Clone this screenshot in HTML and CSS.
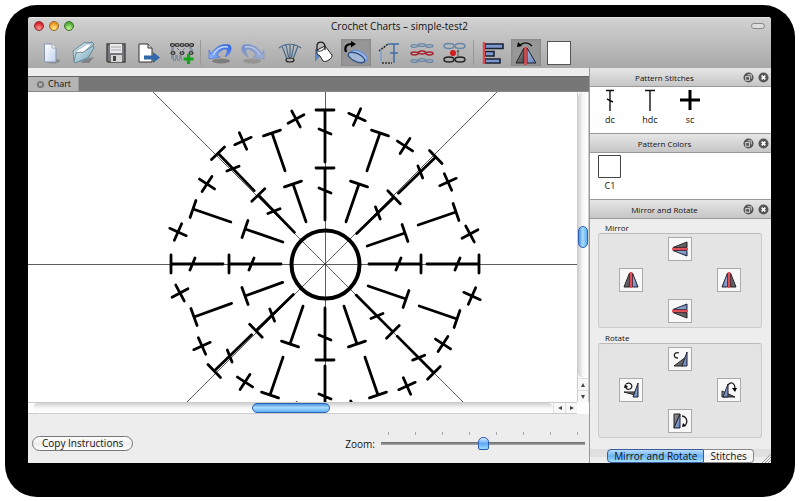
FILE: index.html
```
<!DOCTYPE html>
<html lang="en">
<head>
    <meta charset="UTF-8">
    <meta name="viewport" content="width=device-width, initial-scale=1.0">
    <title>Crochet Charts – simple-test2</title>
    <link rel="stylesheet" href="styles.css">
</head>
<body>
    <!-- shared shapes -->
    <svg class="defs" width="0" height="0" aria-hidden="true">
        <defs>
            <linearGradient id="paper" x1="0" y1="0" x2="1" y2="1">
                <stop offset="0" stop-color="#fff"/>
                <stop offset="1" stop-color="#c3d3f2"/>
            </linearGradient>
            <linearGradient id="folder" x1="0" y1="0" x2="1" y2="1">
                <stop offset="0" stop-color="#e3f4f8"/>
                <stop offset="1" stop-color="#6d9db0"/>
            </linearGradient>
            <linearGradient id="steel" x1="0" y1="0" x2="1" y2="1">
                <stop offset="0" stop-color="#a9bfe0"/>
                <stop offset="1" stop-color="#5f7fb5"/>
            </linearGradient>
            <linearGradient id="coal" x1="0" y1="0" x2="1" y2="1">
                <stop offset="0" stop-color="#9b9ba0"/>
                <stop offset="1" stop-color="#45454a"/>
            </linearGradient>
            <linearGradient id="swoosh" x1="0" y1="1" x2="1" y2="0">
                <stop offset="0" stop-color="#8fb5ff"/>
                <stop offset="1" stop-color="#2f62dd"/>
            </linearGradient>
            <g id="sc">
                <path d="M-9 0H9M0-9V9"/>
            </g>
            <g id="hdc">
                <path d="M-9 0H9M0 0V40"/>
            </g>
            <g id="dc">
                <path d="M-9-96H9M0-96V-44M-6-76L6-71"/>
                <path d="M-9-154H9M0-154V-102M-6-135L6-130"/>
            </g>
            <g id="flip">
                <path d="M9.500 4v14H4z" fill="url(#coal)" stroke="#222"/>
                <path d="M12.500 4v14H18z" fill="url(#steel)" stroke="#223"/>
                <path d="M11 3v16" stroke="#dd5059" stroke-width="2.600"/>
            </g>
            <g id="wedge">
                <path d="M18 4v14h-5z" fill="url(#steel)" stroke="#223"/>
            </g>
            <g id="undo">
                <ellipse cx="13" cy="20" rx="9" ry="2.500" fill="#555" opacity=".55"/>
                <path d="M1 9l2 4C8 5 15 2 22 4c3 4 0 9-5 12 2-4 3-7 1-8-4 0-7 3-9 6l3 2L1 18z" fill="url(#swoosh)" stroke="#3b6be0" stroke-width=".6"/>
                <path d="M5 14C9 7 15 5 20 6" fill="none" stroke="#c5d9ff" stroke-width="1.500"/>
            </g>
            <g id="float">
                <circle cx="6" cy="6" r="5.5" fill="#555"/>
                <rect x="3" y="5" width="4" height="4" fill="none" stroke="#ddd"/>
                <path d="M5 3h4v4" fill="none" stroke="#ddd"/>
            </g>
            <g id="close">
                <circle cx="6" cy="6" r="5.5" fill="#555"/>
                <path d="M4 4l4 4M8 4l-4 4" stroke="#fff" stroke-width="1.8"/>
            </g>
        </defs>
    </svg>

    <div class="frame">
        <div class="window">
            <header class="top">
                <div class="titlebar">
                    <div class="lights">
                        <button class="light red" aria-label="Close"></button>
                        <button class="light amber" aria-label="Minimize"></button>
                        <button class="light green" aria-label="Maximize"></button>
                    </div>
                    <h1>Crochet Charts – simple-test2</h1>
                    <button class="pill" aria-label="Toggle toolbar"></button>
                </div>
                <div class="toolbar">
                    <button class="tool" aria-label="New">
                        <svg viewBox="0 0 24 24"><ellipse cx="15" cy="20" rx="7" ry="2.5" fill="#666" opacity=".5"/><path d="M6.500 3H14l4 4v14H6.500z" fill="url(#paper)" stroke="#8794ae"/><path d="M14 3v4h4" fill="#fff" stroke="#8794ae" stroke-width=".7"/></svg>
                    </button>
                    <button class="tool" aria-label="Open">
                        <svg viewBox="0 0 24 24"><path d="M10 22h8l5-6-5 1z" fill="#555" opacity=".5"/><path d="M2 10L14 1l2 1 5-1 2 2-9 17H3z" fill="url(#folder)" stroke="#58798a" stroke-width=".8"/><path d="M4 11L16 3l5 0-9 9z" fill="#fff" stroke="#7a96a4" stroke-width=".5"/><path d="M3 21l2-9 5-1 1 1L22 5l1 2-6 10-13 5z" fill="url(#folder)" stroke="#58798a" stroke-width=".8"/></svg>
                    </button>
                    <button class="tool" aria-label="Save">
                        <svg viewBox="0 0 24 24"><path d="M3 3h18v18H4l-1-1z" fill="#77777b" stroke="#444" stroke-width="1.400"/><path d="M6 3h12v9H6z" fill="#e9e9ec"/><path d="M7 6h10M7 9h10" stroke="#aaa"/><path d="M7 14h11v7H7z" fill="#d5d5d8"/><path d="M9 15h3v5H9z" fill="#444"/></svg>
                    </button>
                    <button class="tool" aria-label="Export">
                        <svg viewBox="0 0 24 24"><path d="M2 3h9l4 4v14H2z" fill="#fff" stroke="#333"/><path d="M11 3v4h4" fill="#ddd" stroke="#333"/><path d="M7 14.500h9V11l7 5.500-7 5.500v-3.500H7z" fill="#2f68ad"/></svg>
                    </button>
                    <button class="tool" aria-label="Add rows">
                        <svg viewBox="0 0 24 24">
                            <g fill="none" stroke="#333" stroke-width="1.200"><ellipse cx="2.500" cy="4" rx="2" ry="1.300"/><ellipse cx="7.200" cy="4" rx="2" ry="1.300"/><ellipse cx="12" cy="4" rx="2" ry="1.300"/><ellipse cx="16.800" cy="4" rx="2" ry="1.300"/><ellipse cx="21.500" cy="4" rx="2" ry="1.300"/><ellipse cx="3" cy="12" rx="2" ry="1.300"/><ellipse cx="12" cy="12" rx="2" ry="1.300"/><ellipse cx="21" cy="12" rx="2" ry="1.300"/></g>
                            <path d="M1 7h4M7 7l4 4 4-4M19 7h4M1 9h3M20 9h3M1 15h11M1 17h11M3 19h9" fill="none" stroke="#5f7191" stroke-dasharray="3 1"/>
                            <path d="M18.500 13v10M13.500 18h10" stroke="#14a51b" stroke-width="3.200"/>
                        </svg>
                    </button>
                    <span class="sep"></span>
                    <button class="tool" aria-label="Undo">
                        <svg viewBox="0 0 24 24"><use href="#undo"/></svg>
                    </button>
                    <button class="tool" aria-label="Redo">
                        <svg viewBox="0 0 24 24" opacity=".5"><use href="#undo" transform="matrix(-1 0 0 1 24 0)"/></svg>
                    </button>
                    <button class="tool apart" aria-label="Stitch mode">
                        <svg viewBox="0 0 24 24" fill="none" stroke="#46698c" stroke-width="1.200"><path d="M1 7c6-5 16-5 22 0M4 5l5 13M20 5l-5 13M12 4v14M8 4l2.500 12M16 4l-2.500 12"/><ellipse cx="12" cy="19" rx="4" ry="2" stroke="#222"/></svg>
                    </button>
                    <button class="tool" aria-label="Color mode">
                        <svg viewBox="0 0 24 24"><path d="M4 8v13l6-7V8z" fill="#5d87c0"/><path d="M6 9l8-4 7 9c1 3-6 8-9 6L9 15l-3-2z" fill="#fff" stroke="#222"/><path d="M6 9c2 3 8 0 8-4" fill="none" stroke="#222"/><path d="M6 9V4c1-4 7-4 8 1v4" fill="none" stroke="#222" stroke-width="1.300"/></svg>
                    </button>
                    <button class="tool on" aria-label="Rotate stitch">
                        <svg viewBox="0 0 24 24"><ellipse cx="15" cy="15" rx="9" ry="4.500" transform="rotate(28 15 15)" fill="#a9c0e8" stroke="#6f92d6" stroke-width="1.500"/><ellipse cx="12.500" cy="16.500" rx="9" ry="4" transform="rotate(25 12.500 16.500)" fill="#a4b8d8" stroke="#2f5285" stroke-width="1.400"/><path d="M2 11C0 5 3 3 8 3" fill="none" stroke="#000" stroke-width="2.200"/><path d="M7 0l5 3-5 3.500z"/></svg>
                    </button>
                    <button class="tool" aria-label="Angle">
                        <svg viewBox="0 0 24 24" fill="none" stroke="#3f6ca5" stroke-width="1.500"><path d="M2 10L11 3" stroke="#222" stroke-dasharray="2 1"/><path d="M11 3h11M17 3v19M13 12h8"/><path d="M4 9v12" stroke="#7ea0c8"/><path d="M5 22h10" stroke="#333" stroke-dasharray="2 1"/></svg>
                    </button>
                    <button class="tool" aria-label="Rows">
                        <svg viewBox="0 0 24 24" fill="none" stroke-width="1.200">
                            <g stroke="#6587a8"><ellipse cx="4.500" cy="5" rx="3.500" ry="1.400"/><ellipse cx="12" cy="4" rx="3.500" ry="1.400"/><ellipse cx="19.500" cy="5" rx="3.500" ry="1.400"/><ellipse cx="4.500" cy="20" rx="3.500" ry="1.400"/><ellipse cx="12" cy="19" rx="3.500" ry="1.400"/><ellipse cx="19.500" cy="20" rx="3.500" ry="1.400"/></g>
                            <g stroke="#a8232d" stroke-width="1.500"><ellipse cx="4.500" cy="12.500" rx="3.500" ry="1.400"/><ellipse cx="12" cy="11.500" rx="3.500" ry="1.400"/><ellipse cx="19.500" cy="12.500" rx="3.500" ry="1.400"/></g>
                        </svg>
                    </button>
                    <button class="tool" aria-label="Insert between rows">
                        <svg viewBox="0 0 24 24" fill="none" stroke-width="1.400"><ellipse cx="6" cy="5" rx="5" ry="2.500" stroke="#6587a8"/><ellipse cx="17" cy="5" rx="5" ry="2.500" stroke="#6587a8"/><ellipse cx="6" cy="18.500" rx="5" ry="2.500" stroke="#222"/><ellipse cx="17" cy="18.500" rx="5" ry="2.500" stroke="#222"/><circle cx="10" cy="12" r="3" fill="#d31a1f"/><path d="M15 15v-5m-1 1l1-2 1 2" stroke="#555" stroke-width="1"/></svg>
                    </button>
                    <span class="sep"></span>
                    <button class="tool" aria-label="Align">
                        <svg viewBox="0 0 24 24"><g fill="#7f9ad0" stroke="#1a2233" stroke-width="1.600"><path d="M4 3h18v4.500H4zM4 10.500h9v4.500H4zM4 18h15v4H4z"/></g><path d="M3 1v22" stroke="#e0474b" stroke-width="2.400"/></svg>
                    </button>
                    <button class="tool on" aria-label="Mirror and Rotate">
                        <svg viewBox="0 0 24 24"><path d="M10 7v15H2z" fill="url(#coal)" stroke="#222"/><path d="M13 7v15h9z" fill="url(#steel)" stroke="#223"/><path d="M11.500 6v18" stroke="#d9434b" stroke-width="2.600"/><path d="M5 5c4-4 9-4 13 0" fill="none" stroke="#111" stroke-width="1.500"/><path d="M3 6l1-5 4 4z"/></svg>
                    </button>
                    <button class="tool" aria-label="Pick color"><span class="swatch"></span></button>
                </div>
            </header>

            <div class="body">
                <main class="editor">
                    <div class="tabs">
                        <button class="tab">
                            <svg viewBox="0 0 10 10"><circle cx="5" cy="5" r="4" fill="#777"/><path d="M3.500 3.500l3 3M6.500 3.500l-3 3" stroke="#c4c4c4" stroke-width="1.300"/></svg>
                            Chart
                        </button>
                    </div>
                    <div class="chart">
                        <svg class="canvas" viewBox="-297 -172 549 310" preserveAspectRatio="xMidYMid slice">
                            <path class="guides" d="M-700 .5H700M.5-700V700M-700-700L700 700M-700 700L700-700"/>
                            <circle class="ring" cx="0.5" cy="0.5" r="34"/>
                            <g class="stitches">
                                <use href="#dc"/>
                                <use href="#dc" transform="rotate(46)"/>
                                <use href="#dc" transform="rotate(90)"/>
                                <use href="#dc" transform="rotate(135)"/>
                                <use href="#dc" transform="rotate(180)"/>
                                <use href="#dc" transform="rotate(226)"/>
                                <use href="#dc" transform="rotate(270)"/>
                                <use href="#dc" transform="rotate(316)"/>

                                <use href="#hdc" transform="translate(-32 -80) rotate(-19)"/>
                                <use href="#hdc" transform="translate(-53 -131) rotate(-19)"/>
                                <use href="#hdc" transform="translate(34 -80) rotate(19)"/>
                                <use href="#hdc" transform="translate(55 -131) rotate(19)"/>
                                <use href="#hdc" transform="translate(80 -31) rotate(71)"/>
                                <use href="#hdc" transform="translate(131 -52) rotate(71)"/>
                                <use href="#hdc" transform="translate(81 35) rotate(109)"/>
                                <use href="#hdc" transform="translate(132 55) rotate(109)"/>
                                <use href="#hdc" transform="translate(32 80) rotate(161)"/>
                                <use href="#hdc" transform="translate(53 131) rotate(161)"/>
                                <use href="#hdc" transform="translate(-35 80) rotate(199)"/>
                                <use href="#hdc" transform="translate(-55 131) rotate(199)"/>
                                <use href="#hdc" transform="translate(-80 32) rotate(250)"/>
                                <use href="#hdc" transform="translate(-131 53) rotate(250)"/>
                                <use href="#hdc" transform="translate(-80 -35) rotate(289)"/>
                                <use href="#hdc" transform="translate(-132 -55) rotate(289)"/>

                                <use href="#sc" transform="translate(-29 -145) rotate(-28)"/>
                                <use href="#sc" transform="translate(-82 -123) rotate(-24)"/>
                                <use href="#sc" transform="translate(-118 -80) rotate(33)"/>
                                <use href="#sc" transform="translate(-147 -32) rotate(24)"/>
                                <use href="#sc" transform="translate(32 -147) rotate(24)"/>
                                <use href="#sc" transform="translate(80 -118) rotate(33)"/>
                                <use href="#sc" transform="translate(123 -82) rotate(-24)"/>
                                <use href="#sc" transform="translate(145 -30) rotate(-28)"/>
                                <use href="#sc" transform="translate(-145 29) rotate(-28)"/>
                                <use href="#sc" transform="translate(-123 82) rotate(-24)"/>
                                <use href="#sc" transform="translate(-80 118) rotate(33)"/>
                                <use href="#sc" transform="translate(-32 147) rotate(24)"/>
                                <use href="#sc" transform="translate(147 32) rotate(24)"/>
                                <use href="#sc" transform="translate(118 80) rotate(33)"/>
                                <use href="#sc" transform="translate(82 122) rotate(-24)"/>
                                <use href="#sc" transform="translate(30 145) rotate(-28)"/>
                            </g>
                        </svg>
                        <div class="vbar">
                            <div class="vtrack"><div class="vthumb"></div></div>
                            <button class="arrow" aria-label="Scroll up"><svg viewBox="0 0 6 6"><path d="M3 1l2 4H1z"/></svg></button>
                            <button class="arrow" aria-label="Scroll down"><svg viewBox="0 0 6 6"><path d="M3 5l2-4H1z"/></svg></button>
                        </div>
                        <div class="hbar">
                            <div class="htrack"><div class="hthumb"></div></div>
                            <button class="arrow" aria-label="Scroll left"><svg viewBox="0 0 6 6"><path d="M1 3l4-2v4z"/></svg></button>
                            <button class="arrow" aria-label="Scroll right"><svg viewBox="0 0 6 6"><path d="M5 3L1 1v4z"/></svg></button>
                        </div>
                        <div class="corner"></div>
                    </div>
                    <div class="status">
                        <button class="copy">Copy Instructions</button>
                        <label for="zoom">Zoom:</label>
                        <div class="slider">
                            <div class="ticks"><i></i><i></i><i></i><i></i><i></i><i></i><i></i><i></i></div>
                            <input type="range" id="zoom" min="0" max="100" value="50">
                        </div>
                    </div>
                </main>

                <aside class="docks">
                    <section class="dock">
                        <div class="dock-head">
                            <h2>Pattern Stitches</h2>
                            <button class="round" aria-label="Float"><svg viewBox="0 0 12 12"><use href="#float"/></svg></button>
                            <button class="round" aria-label="Close"><svg viewBox="0 0 12 12"><use href="#close"/></svg></button>
                        </div>
                        <ul class="items">
                            <li><svg viewBox="0 0 24 24" fill="none" stroke="#111"><path d="M8 2.500h8M12 2v21M9 11l6 3" stroke-width="1.400"/></svg>dc</li>
                            <li><svg viewBox="0 0 24 24" fill="none" stroke="#111"><path d="M7 2.500h10M12 2v21" stroke-width="1.400"/></svg>hdc</li>
                            <li><svg viewBox="0 0 24 24" fill="none" stroke="#000"><path d="M2 12h20M12 2v20" stroke-width="3"/></svg>sc</li>
                        </ul>
                    </section>
                    <section class="dock">
                        <div class="dock-head">
                            <h2>Pattern Colors</h2>
                            <button class="round" aria-label="Float"><svg viewBox="0 0 12 12"><use href="#float"/></svg></button>
                            <button class="round" aria-label="Close"><svg viewBox="0 0 12 12"><use href="#close"/></svg></button>
                        </div>
                        <ul class="items">
                            <li><svg viewBox="0 0 24 24" fill="#fff" stroke="#444"><path d="M.500 1.500h22v22H.500z"/></svg>C1</li>
                        </ul>
                    </section>
                    <section class="dock last">
                        <div class="dock-head">
                            <h2>Mirror and Rotate</h2>
                            <button class="round" aria-label="Float"><svg viewBox="0 0 12 12"><use href="#float"/></svg></button>
                            <button class="round" aria-label="Close"><svg viewBox="0 0 12 12"><use href="#close"/></svg></button>
                        </div>
                        <div class="groups">
                            <h3>Mirror</h3>
                            <div class="cross">
                                <button class="up" aria-label="Mirror up"><svg viewBox="0 0 22 22"><use href="#flip" transform="matrix(0 1 1 0 0 0)"/></svg></button>
                                <button class="left" aria-label="Mirror left"><svg viewBox="0 0 22 22"><use href="#flip"/></svg></button>
                                <button class="right" aria-label="Mirror right"><svg viewBox="0 0 22 22"><use href="#flip" transform="matrix(-1 0 0 1 22 0)"/></svg></button>
                                <button class="down" aria-label="Mirror down"><svg viewBox="0 0 22 22"><use href="#flip" transform="matrix(0 -1 1 0 0 22)"/></svg></button>
                            </div>
                            <h3>Rotate</h3>
                            <div class="cross">
                                <button class="up" aria-label="Rotate up"><svg viewBox="0 0 22 22"><path d="M5 18L17 9l-3 9z" fill="url(#coal)" stroke="#222"/><use href="#wedge"/><path d="M10 5c-5-2-7 5-1 5" fill="none" stroke="#222" stroke-width="1.300"/></svg></button>
                                <button class="left" aria-label="Rotate left"><svg viewBox="0 0 22 22"><path d="M4 13h12l-1 3z" fill="url(#coal)" stroke="#222"/><use href="#wedge"/><path d="M6 5c5-3 8 3 4 5-2 1-4 0-4-2" fill="none" stroke="#222" stroke-width="1.300"/><path d="M4 9l1-4 3 3z"/></svg></button>
                                <button class="right" aria-label="Rotate right"><svg viewBox="0 0 22 22"><path d="M4 12v6h13z" fill="url(#coal)" stroke="#222"/><path d="M10 5v13H5z" fill="url(#steel)" stroke="#223"/><path d="M10 6c3-4 7-2 7 4" fill="none" stroke="#222" stroke-width="1.300"/><path d="M14 9h5l-2 4z"/></svg></button>
                                <button class="down" aria-label="Rotate down"><svg viewBox="0 0 22 22"><path d="M5 4h6L5 18z" fill="url(#coal)" stroke="#222"/><path d="M11 4v14H5z" fill="url(#steel)" stroke="#223"/><path d="M13 6c6 1 6 8 2 10" fill="none" stroke="#222" stroke-width="1.300"/><path d="M13 17l1-4 3 3z"/></svg></button>
                            </div>
                        </div>
                        <div class="dock-tabs">
                            <button class="dock-tab active">Mirror and Rotate</button>
                            <button class="dock-tab">Stitches</button>
                        </div>
                        <svg class="grip" viewBox="0 0 9 9"><path d="M0 9l9-9M3 9l6-6M6 9l3-3" stroke="#999"/></svg>
                    </section>
                </aside>
            </div>
        </div>
    </div>
</body>
</html>
```
FILE: styles.css
```
* {
    box-sizing: border-box;
}
body {
    margin: 0;
    padding: 5px;
    min-height: 100vh;
    display: flex;
    background: #fff;
    font-family: "Open Sans", "Noto Sans", sans-serif;
    font-size: 10px;
    color: #111;
}
button {
    margin: 0;
    padding: 0;
    border: none;
    background: none;
    font: inherit;
    color: inherit;
}
svg {
    display: block;
}
h1, h2, h3 {
    margin: 0;
    font-weight: normal;
}
.defs {
    position: absolute;
}
.frame {
    flex: 1;
    display: flex;
    padding: 12px 24px 34px 23px;
    background: #000;
    border-radius: 32px;
}
.window {
    flex: 1;
    display: flex;
    flex-direction: column;
    background: #ededed;
    border-radius: 3px 3px 0 0;
    overflow: hidden;
}

/* title bar and toolbar */
.top {
    padding-bottom: 2px;
    background: linear-gradient(#d2d2d2, #a8a8a8);
    border-top: 1px solid #e4e4e4;
}
.titlebar {
    display: grid;
    grid-template-columns: 1fr auto 1fr;
    align-items: center;
    height: 16px;
    margin-bottom: 5px;
    padding: 0 6px;
}
.titlebar h1 {
    font-size: 10px;
    line-height: 16px;
}
.lights {
    display: flex;
    gap: 5px;
}
.light {
    width: 10px;
    height: 10px;
    border-radius: 50%;
    border: 1px solid #777;
}
.red {
    background: radial-gradient(circle at 50% 80%, #ff9c90, #d8232a 70%);
    border-color: #8f2c2c;
}
.amber {
    background: radial-gradient(circle at 50% 80%, #ffe98a, #ee9420 70%);
    border-color: #9a6420;
}
.green {
    background: radial-gradient(circle at 50% 80%, #c9f59a, #4da832 70%);
    border-color: #3d7428;
}
.pill {
    justify-self: end;
    width: 14px;
    height: 6px;
    border: 1px solid #888;
    border-radius: 3px;
    background: #ddd;
}
.toolbar {
    display: flex;
    align-items: center;
    gap: 3px;
    padding-left: 7px;
}
.tool {
    display: flex;
    align-items: center;
    justify-content: center;
    width: 30px;
    height: 27px;
}
.tool svg {
    width: 24px;
    height: 24px;
}
.tool.on {
    background: #979797;
    box-shadow: inset 0 0 3px #777;
}
.apart {
    margin-left: 4px;
}
.sep {
    width: 1px;
    height: 25px;
    margin-right: 1px;
    background: #999;
}
.swatch {
    width: 24px;
    height: 24px;
    background: #fff;
    border: 1px solid #555;
}

/* chart area */
.body {
    flex: 1;
    display: flex;
    min-height: 0;
}
.editor {
    flex: 1;
    display: flex;
    flex-direction: column;
    min-width: 0;
    padding-top: 8px;
}
.tabs {
    display: flex;
    height: 16px;
    background: #777;
    border-top: 1px solid #666;
    border-bottom: 1px solid #888;
}
.tab {
    display: flex;
    align-items: center;
    gap: 3px;
    padding: 0 7px 0 8px;
    background: #b4b4b4;
    border-right: 1px solid #999;
    font-size: 9px;
    line-height: 14px;
}
.tab svg {
    width: 9px;
    height: 9px;
}
.chart {
    flex: 1;
    display: grid;
    grid-template-columns: 1fr 12px;
    grid-template-rows: 1fr 12px;
    min-height: 0;
    background: #fff;
}
.canvas {
    width: 100%;
    height: 100%;
    min-height: 0;
    overflow: hidden;
}
.guides {
    fill: none;
    stroke: #333;
    stroke-width: 0.8;
}
.ring {
    fill: none;
    stroke: #000;
    stroke-width: 4;
}
.stitches {
    fill: none;
    stroke: #000;
    stroke-width: 2.8;
    stroke-linecap: round;
}
.vbar {
    display: flex;
    flex-direction: column;
    border-left: 1px solid #ccc;
    border-right: 1px solid #ccc;
}
.vtrack {
    flex: 1;
    padding-top: 134px;
    background: linear-gradient(to right, #d0d0d0, #f7f7f7 50%, #fff);
    border-radius: 6px;
}
.vthumb {
    height: 22px;
    border: 1px solid #2d62b4;
    border-radius: 5px;
    background: linear-gradient(to right, #4b93e3, #a9dbfb 45%, #5fb2f5);
}
.hbar {
    display: flex;
    padding-left: 5px;
    border-top: 1px solid #ccc;
    border-bottom: 1px solid #ccc;
}
.htrack {
    flex: 1;
    padding-left: 219px;
    background: linear-gradient(#d0d0d0, #f7f7f7 50%, #fff);
    border-radius: 6px;
}
.hthumb {
    width: 78px;
    height: 10px;
    border: 1px solid #2d62b4;
    border-radius: 5px;
    background: linear-gradient(#4b93e3, #a9dbfb 45%, #5fb2f5);
}
.arrow {
    display: flex;
    align-items: center;
    justify-content: center;
    width: 12px;
    height: 12px;
    background: #f8f8f8;
}
.vbar .arrow {
    width: 10px;
    border-top: 1px solid #ddd;
}
.hbar .arrow {
    height: 10px;
    border-left: 1px solid #ddd;
}
.arrow svg {
    width: 6px;
    height: 6px;
    fill: #444;
}
.corner {
    background: #fff;
}
.status {
    display: flex;
    align-items: center;
    height: 49px;
    padding: 6px 4px 0 4px;
}
.copy {
    height: 15px;
    padding: 0 9px;
    margin-right: auto;
    margin-top: 4px;
    border: 1px solid #777;
    border-radius: 8px;
    background: linear-gradient(#fff, #eee 50%, #fdfdfd);
    line-height: 13px;
}
.status label {
    margin-right: 6px;
    margin-top: 4px;
}
.slider {
    width: 204px;
}
.ticks {
    display: flex;
    justify-content: space-between;
    padding: 0 7px;
}
.ticks i {
    width: 1px;
    height: 3px;
    background: #aaa;
}
.slider input {
    display: block;
    width: 100%;
    height: 16px;
    margin: 0;
    appearance: none;
    background: linear-gradient(#666, #aaa) center / 100% 3px no-repeat;
}
.slider input::-webkit-slider-thumb {
    appearance: none;
    width: 11px;
    height: 13px;
    border: 1px solid #2b5db0;
    border-radius: 5px 5px 2px 2px;
    background: linear-gradient(#d4ebff, #5fa9f2 50%, #9adcff);
}

/* right side docks */
.docks {
    display: flex;
    flex-direction: column;
    width: 182px;
    border-left: 1px solid #999;
}
.dock {
    background: #fff;
}
.dock-head {
    display: flex;
    align-items: center;
    height: 19px;
    padding-right: 2px;
    gap: 4px;
    background: linear-gradient(#e6e6e6, #c6c6c6);
    border-bottom: 1px solid #999;
}
.dock-head h2 {
    flex: 1;
    font-size: 8px;
    text-align: center;
}
.round svg {
    width: 11px;
    height: 11px;
}
.items {
    display: flex;
    height: 47px;
    margin: 0;
    padding: 1px 0 0;
    list-style: none;
    border-bottom: 1px solid #999;
}
.items li {
    width: 40px;
    font-size: 9px;
    line-height: 16px;
    text-align: center;
}
.items svg {
    width: 24px;
    height: 24px;
    margin: 0 auto;
}
.last {
    flex: 1;
    display: flex;
    flex-direction: column;
    position: relative;
    background: #ededed;
}
.groups {
    flex: 1;
    padding: 3px 9px 0 8px;
}
.groups h3 {
    padding: 0 7px;
    font-size: 8px;
    line-height: 11px;
}
.cross {
    display: grid;
    grid-template-columns: 24px 24px 24px;
    grid-template-areas: ". up ." "left . right" ". down .";
    justify-content: center;
    gap: 7px 25px;
    padding: 3px 0 4px;
    margin-bottom: 4px;
    background: #e4e4e4;
    border: 1px solid #ccc;
    border-top-color: #bbb;
    border-radius: 3px;
}
.cross button {
    width: 24px;
    height: 24px;
    background: #f8f8f8;
    border: 1px solid #aaa;
}
.cross svg {
    width: 22px;
    height: 22px;
}
.up { grid-area: up; }
.left { grid-area: left; }
.right { grid-area: right; }
.down { grid-area: down; }
.dock-tabs {
    display: flex;
    justify-content: center;
    background: linear-gradient(#e0e0e0 8px, #ededed 8px);
}
.dock-tab {
    height: 14px;
    padding: 0 6px;
    border: 1px solid #888;
    border-left: none;
    border-radius: 0 4px 4px 0;
    background: linear-gradient(#fff, #eee 50%, #fff);
    line-height: 12px;
}
.dock-tab.active {
    border: 1px solid #3c5c9c;
    border-radius: 4px 0 0 4px;
    background: linear-gradient(#b8dcfb, #6bb3f5 50%, #a5e0ff);
}
.grip {
    position: absolute;
    right: 0;
    bottom: 0;
    width: 9px;
    height: 9px;
}
```
